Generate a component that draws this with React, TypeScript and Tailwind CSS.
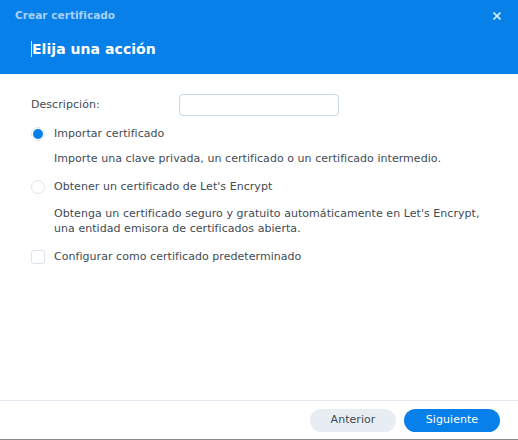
import React, { useState } from 'react';

const App = () => {
  const [mode, setMode] = useState<'import' | 'le'>('import');
  const [isDefault, setIsDefault] = useState(false);

  return (
    <div className="w-[518px] h-[440px] bg-white flex flex-col text-[#414b55] [font-family:'DejaVu_Sans',Verdana,sans-serif] text-[11px] tracking-[0.05px] border-b border-[#8a8a8a]">
      {/* Header */}
      <div className="h-[74px] bg-[#0780ea] flex flex-col shrink-0">
        <div className="h-[31px] flex items-center justify-between pl-[15px] pr-[17px]">
          <span className="text-[10.5px] font-bold text-[#a9d1f7]">Crear certificado</span>
          <button className="text-[#d4e9fd]">
            <svg width="8" height="8" viewBox="0 0 8 8" fill="none" stroke="currentColor" strokeWidth="1.7">
              <path d="M0.5 0.5l7 7M7.5 0.5l-7 7" />
            </svg>
          </button>
        </div>
        <div className="pl-[31px] flex items-center h-[36px]">
          <span className="w-px h-[16px] bg-[#cfe6fc]" />
          <span className="text-white font-bold text-[14px]">Elija una acción</span>
        </div>
      </div>

      {/* Body */}
      <div className="flex-1 px-[31px] pt-[20px]">
        <div className="flex items-center h-[22px]">
          <label className="w-[148px]">Descripción:</label>
          <input className="w-[160px] h-[22px] rounded-[4px] border border-[#c8d9e8] outline-none px-2" />
        </div>

        <button className="flex items-center mt-[9px] h-[18px]" onClick={() => setMode('import')}>
          <span className={`w-[14px] h-[14px] rounded-full border flex items-center justify-center ${mode === 'import' ? 'border-[#dbe9f7]' : 'border-[#e0e6ec]'}`}>
            {mode === 'import' && <span className="w-[10px] h-[10px] rounded-full bg-[#0780ea]" />}
          </span>
          <span className="ml-[9px]">Importar certificado</span>
        </button>
        <p className="ml-[23px] mt-[8px] leading-[15px]">Importe una clave privada, un certificado o un certificado intermedio.</p>

        <button className="flex items-center mt-[12px] h-[18px]" onClick={() => setMode('le')}>
          <span className={`w-[14px] h-[14px] rounded-full border flex items-center justify-center ${mode === 'le' ? 'border-[#dbe9f7]' : 'border-[#e0e6ec]'}`}>
            {mode === 'le' && <span className="w-[10px] h-[10px] rounded-full bg-[#0780ea]" />}
          </span>
          <span className="ml-[9px]">Obtener un certificado de Let's Encrypt</span>
        </button>
        <p className="ml-[23px] mt-[10px] leading-[15px]">
          Obtenga un certificado seguro y gratuito automáticamente en Let's Encrypt,
          <br />
          una entidad emisora de certificados abierta.
        </p>

        <button className="flex items-center mt-[12px] h-[18px]" onClick={() => setIsDefault(!isDefault)}>
          <span className={`w-[14px] h-[14px] rounded-[3px] border ${isDefault ? 'bg-[#0780ea] border-[#0780ea]' : 'border-[#dde3ea]'}`} />
          <span className="ml-[9px]">Configurar como certificado predeterminado</span>
        </button>
      </div>

      {/* Footer */}
      <div className="h-[39px] border-t border-[#e3e9f0] flex items-center justify-end gap-[8px] pr-[18px] shrink-0">
        <button className="w-[86px] h-[23px] rounded-full bg-[#e8edf4] text-[#414b55]">Anterior</button>
        <button className="w-[96px] h-[23px] rounded-full bg-[#0780ea] text-white">Siguiente</button>
      </div>
    </div>
  );
};

export default App;
